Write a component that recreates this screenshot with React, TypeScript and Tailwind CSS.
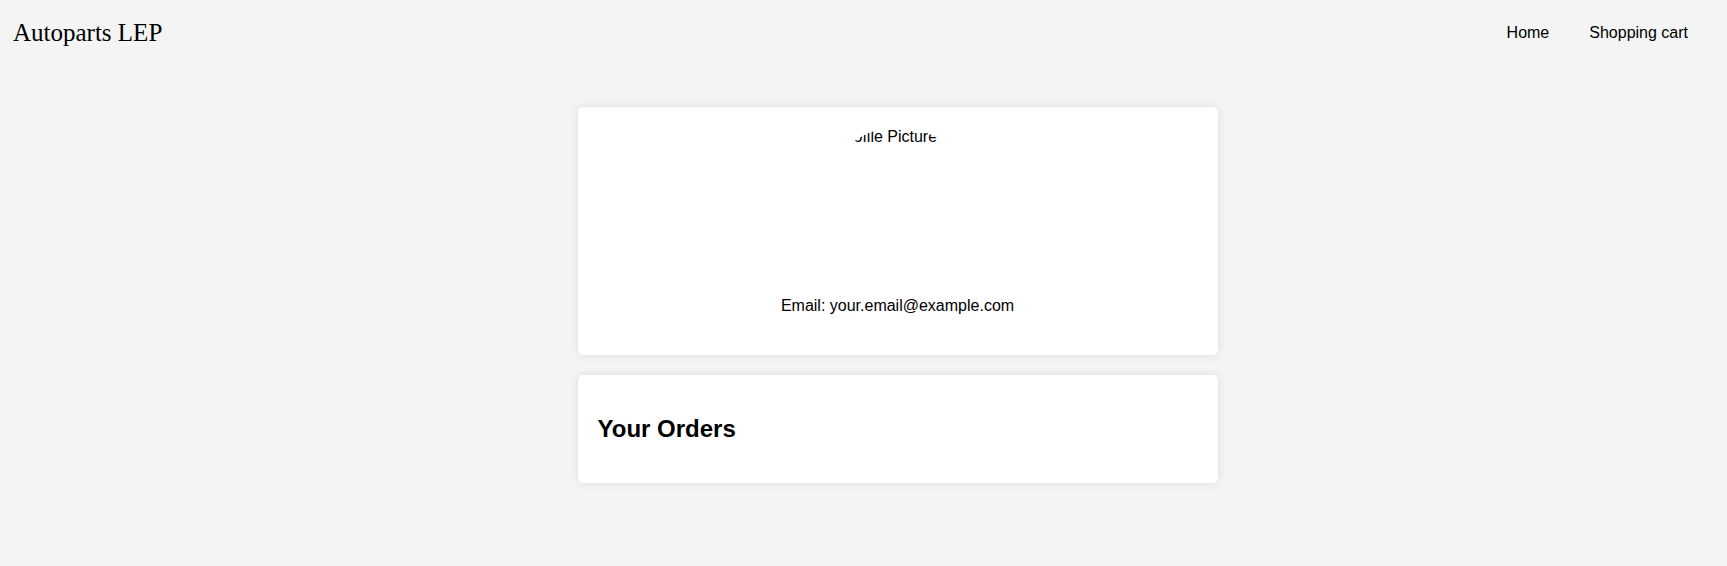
import React from 'react';

const sans = { fontFamily: '"Liberation Sans", Arial, sans-serif' };

export default function App() {
  return (
    <div className="min-h-[566px] bg-[#f4f4f4] text-black" style={sans}>
      {/* Header */}
      <header className="h-[65px] flex items-center justify-between pl-[13px] pr-[19px]">
        <h1 className="text-[25px] leading-[29px] font-normal font-['Liberation_Serif',serif]">
          Autoparts LEP
        </h1>
        <nav className="flex">
          <a href="#" className="px-5 text-base leading-[18px] text-black">
            Home
          </a>
          <a href="#" className="px-5 text-base leading-[18px] text-black">
            Shopping cart
          </a>
        </nav>
      </header>

      {/* Content */}
      <main className="flex flex-col items-center pl-[68px] pt-[42px]">
        {/* Profile card */}
        <section className="w-[640px] bg-white rounded-[5px] shadow-[0_0_10px_rgba(0,0,0,0.1)] px-5 pt-5 pb-[40px] flex flex-col items-center">
          <div className="w-[150px] h-[150px] rounded-full overflow-hidden pt-[1px] pl-[15px]">
            <span className="block whitespace-nowrap text-base leading-[18px]">Profile Picture</span>
          </div>
          <p className="mt-5 text-base leading-[18px] text-center">Email: your.email@example.com</p>
        </section>

        {/* Orders card */}
        <section className="w-[640px] mt-5 bg-white rounded-[5px] shadow-[0_0_10px_rgba(0,0,0,0.1)] p-5">
          <h2 className="my-5 text-2xl leading-[28px] font-bold">Your Orders</h2>
        </section>
      </main>
    </div>
  );
}
